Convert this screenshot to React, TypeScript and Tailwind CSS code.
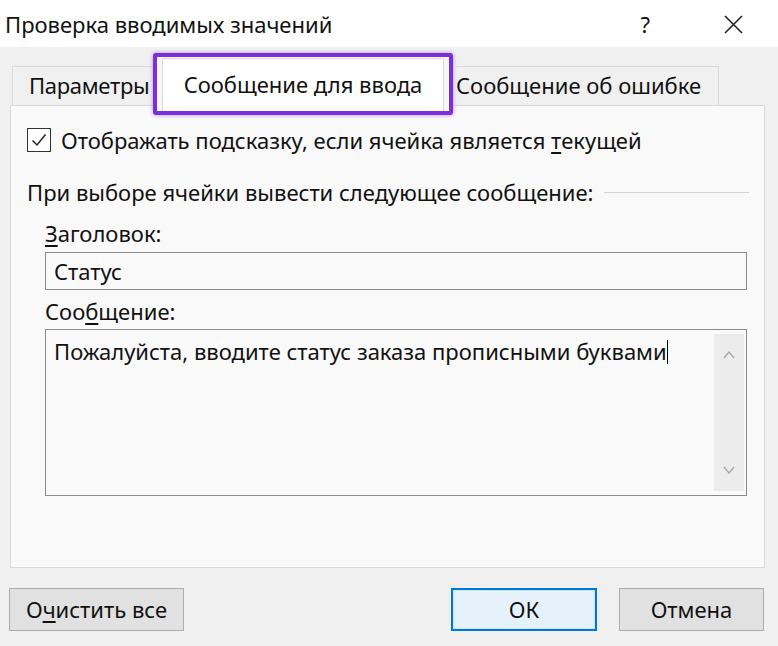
import React from 'react';

const font = { fontFamily: '"Noto Sans", "Open Sans", sans-serif' };

function CloseIcon() {
    return (
        <svg width="19" height="19" viewBox="0 0 19 19" className="text-[#222]">
            <path d="M1 1 L18 18 M18 1 L1 18" stroke="currentColor" strokeWidth="1.6" fill="none" />
        </svg>
    );
}

function Chevron({ down = false }: { down?: boolean }) {
    return (
        <svg width="12" height="8" viewBox="0 0 12 8" className="text-[#a6a6a6]">
            <path
                d={down ? 'M1 1 L6 7 L11 1' : 'M1 7 L6 1 L11 7'}
                stroke="currentColor"
                strokeWidth="1.3"
                fill="none"
            />
        </svg>
    );
}

export default function App() {
    return (
        <div className="w-[778px] h-[646px] bg-[#f0f0f0] flex flex-col text-[#111] text-[22px] overflow-hidden" style={font}>
            {/* ─── Title bar ─── */}
            <div className="h-[47px] bg-white flex items-center pl-[5px] pt-[1px] shrink-0">
                <span className="leading-none">Проверка вводимых значений</span>
                <span className="ml-auto leading-none mr-[74px]">?</span>
                <div className="mr-[35px]">
                    <CloseIcon />
                </div>
            </div>

            {/* ─── Tabs ─── */}
            <div className="flex items-end pl-[12px] mt-[6px] h-[52px] shrink-0 relative z-10">
                <div className="w-[141px] h-[39px] border-t border-l border-[#d9d9d9] flex items-center pl-[16px] pb-[2px] tracking-[-0.3px] whitespace-nowrap overflow-hidden">
                    Параметры
                </div>
                <div className="w-[300px] h-[62px] -mb-[10px] border-[4px] border-[#7c2ed8] rounded-[3px] shadow-[0_0_4px_#b98af0] bg-[#f7f7f7] flex px-[5px] pt-[1px]">
                    <div className="flex-1 bg-white border-x border-t border-[#d9d9d9] flex items-center justify-center pb-[2px]">
                        Сообщение для ввода
                    </div>
                </div>
                <div className="w-[266px] h-[39px] border-t border-r border-[#d9d9d9] flex items-center pl-[3px] pb-[2px]">
                    Сообщение об ошибке
                </div>
            </div>

            {/* ─── Panel ─── */}
            <div className="ml-[10px] w-[755px] h-[463px] border border-[#d9d9d9] bg-[#f9f9f9] flex flex-col pl-[16px] pr-[15px] pt-[22px] shrink-0">
                <div className="h-[24px] flex items-center">
                    <div className="w-[24px] h-[24px] border-[1.5px] border-[#333] bg-white flex items-center justify-center shrink-0">
                        <svg width="16" height="14" viewBox="0 0 16 14">
                            <path d="M1.5 7.5 L6 12 L14.5 1.5" stroke="#222" strokeWidth="1.5" fill="none" />
                        </svg>
                    </div>
                    <span className="ml-[10px] whitespace-nowrap">
                        Отображать подсказку, если ячейка является <u className="underline-offset-[3px]">т</u>екущей
                    </span>
                </div>

                <div className="h-[24px] flex items-center mt-[28px]">
                    <span className="whitespace-nowrap">При выборе ячейки вывести следующее сообщение:</span>
                    <div className="flex-1 h-px bg-[#d4d4d4] ml-[11px]" />
                </div>

                <div className="pl-[18px] pr-[2px] flex flex-col">
                    <div className="h-[24px] flex items-center mt-[17px]">
                        <span>
                            <u className="underline-offset-[3px]">З</u>аголовок:
                        </span>
                    </div>
                    <div className="h-[38px] mt-[7px] border border-[#8a8a8a] bg-[#fafafa] flex items-center pl-[8px]">
                        Статус
                    </div>

                    <div className="h-[24px] flex items-center mt-[9px]">
                        <span>
                            Соо<u className="underline-offset-[3px]">б</u>щение:
                        </span>
                    </div>
                    <div className="h-[167px] mt-[6px] border border-[#8a8a8a] bg-[#fafafa] flex">
                        <div className="flex-1 pl-[8px] pt-[7px] leading-[28px] flex items-start whitespace-nowrap">
                            <span>Пожалуйста, вводите статус заказа прописными буквами</span>
                            <span className="w-px h-[24px] bg-black mt-[3px]" />
                        </div>
                        <div className="w-[30px] my-[4px] mr-[2px] bg-[#ececec] flex flex-col items-center justify-between py-[17px]">
                            <Chevron />
                            <Chevron down />
                        </div>
                    </div>
                </div>
            </div>

            {/* ─── Buttons ─── */}
            <div className="flex items-center pl-[9px] pr-[14px] mt-[20px]">
                <button className="w-[175px] h-[43px] bg-[#e1e1e1] border border-[#adadad]">
                    О<u className="underline-offset-[3px]">ч</u>истить все
                </button>
                <button className="ml-auto w-[146px] h-[43px] bg-[#e5f1fb] border-2 border-[#0078d7] shadow-[inset_0_0_0_1px_#cce4f7]">
                    ОК
                </button>
                <button className="ml-[22px] w-[145px] h-[43px] bg-[#e1e1e1] border border-[#adadad]">
                    Отмена
                </button>
            </div>
        </div>
    );
}
